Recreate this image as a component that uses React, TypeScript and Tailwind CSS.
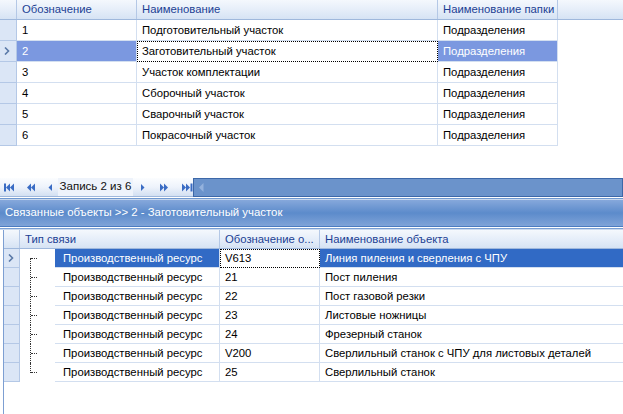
import React from "react";

const topRows = [
  { code: "1", name: "Подготовительный участок", folder: "Подразделения" },
  { code: "2", name: "Заготовительный участок", folder: "Подразделения" },
  { code: "3", name: "Участок комплектации", folder: "Подразделения" },
  { code: "4", name: "Сборочный участок", folder: "Подразделения" },
  { code: "5", name: "Сварочный участок", folder: "Подразделения" },
  { code: "6", name: "Покрасочный участок", folder: "Подразделения" },
];

const links = [
  { code: "V613", name: "Линия пиления и сверления с ЧПУ" },
  { code: "21", name: "Пост пиления" },
  { code: "22", name: "Пост газовой резки" },
  { code: "23", name: "Листовые ножницы" },
  { code: "24", name: "Фрезерный станок" },
  { code: "V200", name: "Сверлильный станок с ЧПУ для листовых деталей" },
  { code: "25", name: "Сверлильный станок" },
];

const Chevron = () => (
  <svg width="6" height="8" viewBox="0 0 6 8" className="ml-[4px]">
    <path d="M1 0.5 L4.5 4 L1 7.5" fill="none" stroke="#5b7aa8" strokeWidth="1.6" />
  </svg>
);

const header = "bg-gradient-to-b from-[#f4f8fd] via-[#e6eef9] to-[#d6e3f4] text-[#1c3f94]";

function NavIcon({ d, w = 12 }: { d: string; w?: number }) {
  return (
    <svg width={w} height="9" viewBox={`0 0 ${w} 9`}>
      <path d={d} fill="#3a6cc4" />
    </svg>
  );
}

export default function App() {
  return (
    <div
      className="relative h-[414px] w-[623px] overflow-hidden bg-white text-[11.3px] text-black"
      style={{ fontFamily: '"Liberation Sans", Arial, sans-serif' }}
    >
      {/* top grid */}
      <div className={`flex h-[20px] border-b border-[#9fb8dc] ${header}`}>
        <div className="w-[17px] shrink-0 border-r border-[#b4c8e6]" />
        <div className="flex w-[120px] shrink-0 items-center border-r border-[#b4c8e6] pl-[5px]">Обозначение</div>
        <div className="flex w-[301px] shrink-0 items-center border-r border-[#b4c8e6] pl-[5px]">Наименование</div>
        <div className="flex w-[120px] shrink-0 items-center border-r border-[#b4c8e6] pl-[5px]">Наименование папки</div>
        <div className="flex-1" />
      </div>
      {topRows.map((r, i) => {
        const sel = i === 1;
        return (
          <div key={r.code} className="flex h-[21px]">
            <div className="flex w-[17px] shrink-0 items-center border-b border-r border-[#b4c8e6] bg-[#dbe6f6]">
              {sel && <Chevron />}
            </div>
            <div
              className={`flex w-[120px] shrink-0 items-center border-b border-r border-[#d3dff0] pl-[5px] ${
                sel ? "bg-[#7b98e0] text-white" : ""
              }`}
            >
              {r.code}
            </div>
            {sel ? (
              <div className="flex w-[301px] shrink-0 items-center border border-dotted border-black pl-[4px]">
                {r.name}
              </div>
            ) : (
              <div className="flex w-[301px] shrink-0 items-center border-b border-r border-[#d3dff0] pl-[5px]">
                {r.name}
              </div>
            )}
            <div
              className={`flex w-[120px] shrink-0 items-center border-b border-r border-[#d3dff0] pl-[5px] ${
                sel ? "bg-[#7b98e0] text-white" : ""
              }`}
            >
              {r.folder}
            </div>
          </div>
        );
      })}

      <div className="h-[32px]" />

      {/* navigator */}
      <div className="flex h-[19px]">
        <div className="flex w-[193px] shrink-0 items-center border-b border-[#9fb8dc] bg-gradient-to-b from-[#fbfdff] via-[#eef3fb] to-[#d3e0f2]">
          <div className="ml-[4px] flex w-[54px] items-center justify-between pr-[5px]">
            <NavIcon d="M0 0.5 H2 V8.5 H0 Z M6 0.5 L2 4.5 L6 8.5 Z M10 0.5 L6 4.5 L10 8.5 Z" w={11} />
            <NavIcon d="M5 0.5 L1 4.5 L5 8.5 Z M9 0.5 L5 4.5 L9 8.5 Z" w={10} />
            <NavIcon d="M5 1 L1.5 4.5 L5 8 Z" w={6} />
          </div>
          <div className="flex h-[18px] w-[75px] items-center justify-center bg-[#eef3fb] text-[11.5px] text-[#111]">
            Запись 2 из 6
          </div>
          <div className="ml-[7px] flex w-[53px] items-center justify-between">
            <NavIcon d="M1 1 L4.5 4.5 L1 8 Z" w={6} />
            <NavIcon d="M1 0.5 L5 4.5 L1 8.5 Z M5 0.5 L9 4.5 L5 8.5 Z" w={10} />
            <NavIcon d="M0 0.5 L4 4.5 L0 8.5 Z M4 0.5 L8 4.5 L4 8.5 Z M8.5 0.5 H10.5 V8.5 H8.5 Z" w={11} />
          </div>
        </div>
        <div className="flex flex-1 items-center border border-[#3d68a8] bg-[#6b93cb] pl-[5px]">
          <svg width="5" height="9" viewBox="0 0 5 9">
            <path d="M4.5 0 L0 4.5 L4.5 9 Z" fill="#94b2dd" />
          </svg>
        </div>
      </div>

      {/* caption */}
      <div className="h-[1px] bg-white" />
      <div className="h-[1px] bg-[#6f98d0]" />
      <div className="h-[1px] bg-[#c6d7ee]" />
      <div className="flex h-[26px] items-center bg-gradient-to-b from-[#86a8db] via-[#5c8bcb] to-[#7fa3d8] pl-[5px] text-[11.4px] text-white">
        Связанные объекты &gt;&gt; 2 - Заготовительный участок
      </div>
      <div className="h-[1px] bg-[#4c7cc0]" />
      <div className="h-[1px] bg-white" />
      <div className="h-[1px] bg-[#7a9fd4]" />
      <div className="h-[1px] bg-[#c9d9ef]" />

      {/* lower grid */}
      <div className="ml-[3px] h-[185px] border-l border-[#7d9fd2]">
        <div className={`flex h-[19px] border-b border-[#9fb8dc] ${header}`}>
          <div className="w-[16px] shrink-0 border-r border-[#b4c8e6]" />
          <div className="flex w-[200px] shrink-0 items-center border-r border-[#b4c8e6] pl-[5px]">Тип связи</div>
          <div className="flex w-[100px] shrink-0 items-center border-r border-[#b4c8e6] pl-[5px]">Обозначение о...</div>
          <div className="flex flex-1 items-center pl-[5px]">Наименование объекта</div>
        </div>
        {links.map((r, i) => {
          const sel = i === 0;
          const last = i === links.length - 1;
          return (
            <div key={r.code} className="flex h-[19px]">
              <div className="flex w-[16px] shrink-0 items-center border-b border-r border-[#b4c8e6] bg-[#dbe6f6]">
                {sel && <Chevron />}
              </div>
              <div className="relative w-[35px] shrink-0">
                <div
                  className={`absolute left-[10px] w-0 border-l border-dotted border-[#333] ${
                    i === 0 ? "top-[9px] bottom-0" : last ? "top-0 h-[10px]" : "top-0 bottom-0"
                  }`}
                />
                <div className="absolute left-[11px] top-[9px] w-[6px] border-t border-dotted border-[#333]" />
              </div>
              <div
                className={`flex w-[165px] shrink-0 items-center border-b border-r border-[#d3dff0] pl-[8px] ${
                  sel ? "bg-[#316ac5] text-white" : ""
                }`}
              >
                Производственный ресурс
              </div>
              {sel ? (
                <div className="flex w-[100px] shrink-0 items-center border border-dotted border-black pl-[4px]">
                  {r.code}
                </div>
              ) : (
                <div className="flex w-[100px] shrink-0 items-center border-b border-r border-[#d3dff0] pl-[5px]">
                  {r.code}
                </div>
              )}
              <div
                className={`flex flex-1 items-center border-b border-[#d3dff0] pl-[5px] ${
                  sel ? "bg-[#316ac5] text-white" : ""
                }`}
              >
                {r.name}
              </div>
            </div>
          );
        })}
      </div>
    </div>
  );
}
